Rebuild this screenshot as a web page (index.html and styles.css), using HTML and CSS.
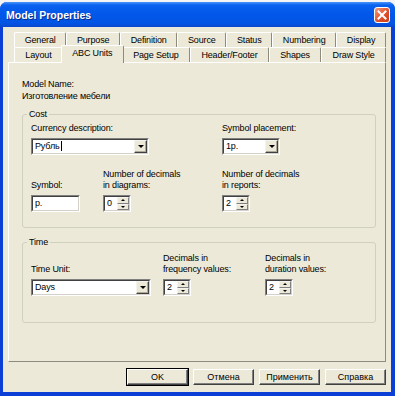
FILE: index.html
```html
<!DOCTYPE html>
<html lang="en">
  <head>
    <meta charset="UTF-8" />
    <meta name="viewport" content="width=device-width, initial-scale=1.0" />
    <title>Model Properties</title>
    <link rel="stylesheet" href="styles.css">
  </head>
  <body>
    <div class="window">
      <div class="titlebar">
        <span class="title">Model Properties</span>
        <span class="close">
          <svg width="10" height="10" viewBox="0 0 10 10">
            <path d="M1.5 1.5 L8.5 8.5 M8.5 1.5 L1.5 8.5" stroke="#fff" stroke-width="2" stroke-linecap="square" />
          </svg>
        </span>
      </div>

      <div class="client">
        <div class="tabs">
          <div class="tab_row">
            <span class="tab">General</span>
            <span class="tab">Purpose</span>
            <span class="tab">Definition</span>
            <span class="tab">Source</span>
            <span class="tab">Status</span>
            <span class="tab">Numbering</span>
            <span class="tab">Display</span>
          </div>
          <div class="tab_row">
            <span class="tab">Layout</span>
            <span class="tab active">ABC Units</span>
            <span class="tab">Page Setup</span>
            <span class="tab">Header/Footer</span>
            <span class="tab">Shapes</span>
            <span class="tab">Draw Style</span>
          </div>
        </div>

        <div class="panel">
          <div class="line">Model Name:</div>
          <div class="line">Изготовление мебели</div>

          <fieldset class="group cost">
            <legend>Cost</legend>
            <div class="cost_grid">
              <div class="field wide">
                <label>Currency description:</label>
                <div class="sunken combo currency">
                  <div class="inner">
                    <span class="value">Рубль<i class="caret"></i></span>
                    <span class="drop"><b></b></span>
                  </div>
                </div>
              </div>
              <div class="field">
                <label>Symbol placement:</label>
                <div class="sunken combo placement">
                  <div class="inner">
                    <span class="value">1р.</span>
                    <span class="drop"><b></b></span>
                  </div>
                </div>
              </div>

              <div class="field">
                <label>Symbol:</label>
                <div class="sunken text symbol">
                  <div class="inner"><span class="value">р.</span></div>
                </div>
              </div>
              <div class="field">
                <label>Number of decimals<br>in diagrams:</label>
                <div class="sunken spin">
                  <div class="inner">
                    <span class="value">0</span>
                    <span class="arrows"><b class="up"></b><b class="down"></b></span>
                  </div>
                </div>
              </div>
              <div class="field">
                <label>Number of decimals<br>in reports:</label>
                <div class="sunken spin">
                  <div class="inner">
                    <span class="value">2</span>
                    <span class="arrows"><b class="up"></b><b class="down"></b></span>
                  </div>
                </div>
              </div>
            </div>
          </fieldset>

          <fieldset class="group time">
            <legend>Time</legend>
            <div class="time_grid">
              <div class="field">
                <label>Time Unit:</label>
                <div class="sunken combo unit">
                  <div class="inner">
                    <span class="value">Days</span>
                    <span class="drop"><b></b></span>
                  </div>
                </div>
              </div>
              <div class="field">
                <label>Decimals in<br>frequency values:</label>
                <div class="sunken spin">
                  <div class="inner">
                    <span class="value">2</span>
                    <span class="arrows"><b class="up"></b><b class="down"></b></span>
                  </div>
                </div>
              </div>
              <div class="field">
                <label>Decimals in<br>duration values:</label>
                <div class="sunken spin">
                  <div class="inner">
                    <span class="value">2</span>
                    <span class="arrows"><b class="up"></b><b class="down"></b></span>
                  </div>
                </div>
              </div>
            </div>
          </fieldset>
        </div>

        <div class="buttons">
          <button class="btn default">OK</button>
          <button class="btn">Отмена</button>
          <button class="btn">Применить</button>
          <button class="btn">Справка</button>
        </div>
      </div>
    </div>
  </body>
</html>
```

FILE: styles.css
```css
* {
  margin: 0;
  padding: 0;
  box-sizing: border-box;
}
body {
  background: #f4f4f4;
  font-family: "Liberation Sans", Arial, sans-serif;
  font-size: 9px;
  letter-spacing: -0.15px;
  color: #000;
}

/* window frame */
.window {
  margin-top: 2px;
  width: 395px;
  height: 394px;
  display: flex;
  flex-direction: column;
  background: #0b3fd6;
  border-radius: 7px 7px 0 0;
  overflow: hidden;
}
.titlebar {
  flex: none;
  height: 25px;
  display: flex;
  align-items: center;
  justify-content: space-between;
  padding: 0 5px 0 6px;
  background: linear-gradient(#4a96fa 0, #0a62ef 3px, #0258ea 45%, #0254e4 85%, #0b48cc 100%);
}
.title {
  color: #fff;
  font-weight: bold;
  font-size: 10.5px;
  letter-spacing: 0;
  text-shadow: 1px 1px 0 #0a2c8c;
}
.close {
  width: 16px;
  height: 16px;
  display: flex;
  align-items: center;
  justify-content: center;
  border: 1px solid #fff;
  border-radius: 3px;
  background: linear-gradient(135deg, #f39a7c, #e0512b 55%, #c83d17);
}

.client {
  flex: 1;
  margin: 0 4px 4px 3px;
  padding: 5px 5px 0 5px;
  background: #ece9d8;
  display: flex;
  flex-direction: column;
}

/* tabs */
.tabs {
  margin-left: 6px;
}
.tab_row {
  display: flex;
  height: 15px;
}
.tab {
  flex: 1 1 auto;
  padding: 0 4px;
  text-align: center;
  line-height: 14px;
  background: #ece9d8;
  border: 1px solid;
  border-color: #fff #8d8b7e transparent #fff;
  border-bottom: none;
  border-radius: 2px 2px 0 0;
}
.tab.active {
  position: relative;
  z-index: 1;
  height: 18px;
  margin: -2px -2px -1px;
  line-height: 14px;
}

/* tab page */
.panel {
  height: 300px;
  padding: 15px 9px 0 13px;
  border: 1px solid;
  border-color: #fff #8d8b7e #8d8b7e #fff;
}
.line {
  line-height: 12px;
}

.group {
  border: 1px solid #d0d0bf;
  border-radius: 3px;
  padding: 3px 0 15px 8px;
}
.group legend {
  margin-left: -4px;
  padding: 0 2px;
  line-height: 12px;
}
.cost {
  margin-top: 6px;
}
.time {
  margin-top: 8px;
  padding-top: 5px;
  padding-bottom: 26px;
}
.cost_grid {
  display: grid;
  grid-template-columns: 72px 119px auto;
  row-gap: 14px;
  align-items: end;
}
.cost_grid .wide {
  grid-column: span 2;
}
.time_grid {
  display: grid;
  grid-template-columns: 132px 102px auto;
  align-items: end;
}
.field label {
  display: block;
  line-height: 11px;
  margin-bottom: 4px;
}

/* classic sunken edit boxes */
.sunken {
  height: 17px;
  border: 1px solid;
  border-color: #808080 #fff #fff #808080;
}
.sunken .inner {
  height: 100%;
  display: flex;
  background: #fff;
  border: 1px solid;
  border-color: #404040 #d4d0c8 #d4d0c8 #404040;
}
.value {
  flex: 1;
  padding-left: 2px;
  line-height: 13px;
  white-space: nowrap;
}
.caret {
  display: inline-block;
  width: 1px;
  height: 10px;
  margin-left: 1px;
  vertical-align: -2px;
  background: #000;
}
.currency { width: 118px; }
.placement { width: 58px; }
.symbol { width: 49px; }
.unit { width: 120px; }
.spin { width: 28px; }

.drop {
  width: 13px;
  display: flex;
  align-items: center;
  justify-content: center;
  background: #ece9d8;
  border: 1px solid;
  border-color: #f4f3ee #404040 #404040 #f4f3ee;
  box-shadow: inset -1px -1px #aca899;
}
.drop b {
  border-left: 3px solid transparent;
  border-right: 3px solid transparent;
  border-top: 3px solid #000;
}
.arrows {
  width: 12px;
  display: flex;
  flex-direction: column;
}
.arrows b {
  flex: 1;
  display: flex;
  align-items: center;
  justify-content: center;
  background: #ece9d8;
  border: 1px solid;
  border-color: #f4f3ee #808080 #808080 #f4f3ee;
}
.arrows b::after {
  content: "";
  border-left: 2px solid transparent;
  border-right: 2px solid transparent;
}
.arrows .up::after {
  border-bottom: 2px solid #000;
}
.arrows .down::after {
  border-top: 2px solid #000;
}

/* dialog buttons */
.buttons {
  display: flex;
  justify-content: flex-end;
  gap: 5px;
  margin-top: 7px;
}
.btn {
  width: 61px;
  height: 16px;
  font: inherit;
  color: #000;
  background: #ece9d8;
  border: 1px solid;
  border-color: #fff #404040 #404040 #fff;
  box-shadow: inset -1px -1px #808080;
}
.btn.default {
  outline: 1px solid #000;
}
```
